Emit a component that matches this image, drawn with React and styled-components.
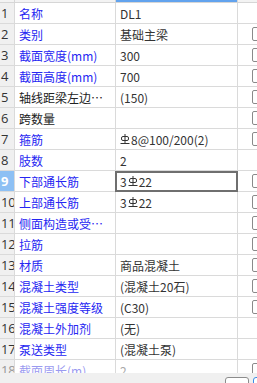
import React from 'react'
import styled, { createGlobalStyle } from 'styled-components'

const Global = createGlobalStyle`
  html, body { margin: 0; padding: 0; overflow: hidden; background: #fff; }
  * { box-sizing: border-box; }
`

const Frame = styled.div`
  width: 257px;
  height: 383px;
  display: flex;
  flex-direction: column;
  overflow: hidden;
  background: #fff;
  font-family: "Noto Sans CJK SC", "Noto Sans", sans-serif;
  font-size: 12px;
`

const Table = styled.div`
  flex: 1;
  overflow: hidden;
`

const Grid = styled.div`
  display: grid;
  grid-template-columns: 15px 101px 122px 32px;
  width: 270px;
`

const Head = styled.div`
  height: 3px;
  border-right: 1px solid #d6d6d6;
  border-bottom: 1px solid #d6d6d6;
  background: ${p => (p.$active ? '#62a3ee' : '#f3f3f3')};
`

const Cell = styled.div`
  height: 21px;
  display: flex;
  align-items: center;
  border-right: 1px solid #dadada;
  border-bottom: 1px solid #dadada;
  white-space: nowrap;
  overflow: hidden;
`

const NumCell = styled(Cell)`
  background: ${p => (p.$active ? '#8dc0f4' : '#f0f0f0')};
  color: ${p => (p.$active ? '#fff' : p.$faded ? '#999' : '#333')};
  font-weight: ${p => (p.$active ? 700 : 400)};
  font-family: "Open Sans", "Noto Sans", sans-serif;
  font-size: 13px;
  padding-left: 1px;
  letter-spacing: -0.3px;
`

const NameCell = styled(Cell)`
  padding-left: 4px;
  padding-right: 2px;
  color: ${p => (p.$faded ? '#9a9af0' : p.$plain ? '#222' : '#2626f2')};
`

const Ellipsis = styled.span`
  overflow: hidden;
  text-overflow: ellipsis;
  display: block;
  min-width: 0;
`

const ValueCell = styled(Cell)`
  padding-left: 4px;
  color: ${p => (p.$faded ? '#aaa' : '#333')};
  margin-left: ${p => (p.$selected ? '-1px' : '0')};
  outline: ${p => (p.$selected ? '2px solid #6f6f6f' : 'none')};
  outline-offset: -2px;
  padding-left: ${p => (p.$selected ? '5px' : '4px')};
  gap: 1px;
`

const CheckCell = styled(Cell)`
  padding-left: 14px;
  border-right: none;
`

const Box = styled.div`
  width: 14px;
  height: 14px;
  flex: none;
  border: 1px solid #8a8a8a;
  border-radius: 2px;
  background: #fff;
`

const Footer = styled.div`
  height: 10px;
  flex: none;
  background: #f0f0f0;
  display: flex;
  gap: 4px;
  padding: 4px 0 0 225px;
  overflow: hidden;
`

const FootButton = styled.div`
  width: ${p => (p.$blue ? '20px' : '24px')};
  height: 14px;
  flex: none;
  border: 1px solid ${p => (p.$blue ? '#3c8ce6' : '#8c8c8c')};
  border-radius: 3px;
  background: #fff;
`

const Steel = () => (
  <svg width="10" height="11" viewBox="0 0 10 11" fill="none" stroke="#333" strokeWidth="1">
    <rect x="1.5" y="2.5" width="7" height="4" rx="1.5" />
    <line x1="5" y1="0" x2="5" y2="10" />
    <line x1="0.5" y1="9.5" x2="9.5" y2="9.5" />
  </svg>
)

const rows = [
  { name: '名称', value: 'DL1', check: false },
  { name: '类别', value: '基础主梁', check: true },
  { name: '截面宽度(mm)', value: '300', check: true },
  { name: '截面高度(mm)', value: '700', check: true },
  { name: '轴线距梁左边线距离(mm)', value: '(150)', check: true, plain: true },
  { name: '跨数量', value: '', check: true, plain: true },
  { name: '箍筋', value: ['', '8@100/200(2)'], check: true },
  { name: '肢数', value: '2', check: false },
  { name: '下部通长筋', value: ['3', '22'], check: true, selected: true },
  { name: '上部通长筋', value: ['3', '22'], check: true },
  { name: '侧面构造或受扭筋(总配筋值)', value: '', check: true },
  { name: '拉筋', value: '', check: true },
  { name: '材质', value: '商品混凝土', check: true },
  { name: '混凝土类型', value: '(混凝土20石)', check: true },
  { name: '混凝土强度等级', value: '(C30)', check: true },
  { name: '混凝土外加剂', value: '(无)', check: false },
  { name: '泵送类型', value: '(混凝土泵)', check: false },
  { name: '截面周长(m)', value: '2', check: true, faded: true },
]

const renderValue = v =>
  Array.isArray(v) ? (
    <>
      {v[0]}
      <Steel />
      {v[1]}
    </>
  ) : (
    v
  )

export default function App() {
  return (
    <Frame>
      <Global />
      <Table>
        <Grid>
          <Head />
          <Head />
          <Head $active />
          <Head />
          {rows.map((r, i) => (
            <React.Fragment key={i}>
              <NumCell $active={r.selected} $faded={r.faded}>{i + 1}</NumCell>
              <NameCell $plain={r.plain} $faded={r.faded}>
                <Ellipsis>{r.name}</Ellipsis>
              </NameCell>
              <ValueCell $selected={r.selected} $faded={r.faded}>{renderValue(r.value)}</ValueCell>
              <CheckCell>{r.check && <Box />}</CheckCell>
            </React.Fragment>
          ))}
        </Grid>
      </Table>
      <Footer>
        <FootButton />
        <FootButton $blue />
      </Footer>
    </Frame>
  )
}
